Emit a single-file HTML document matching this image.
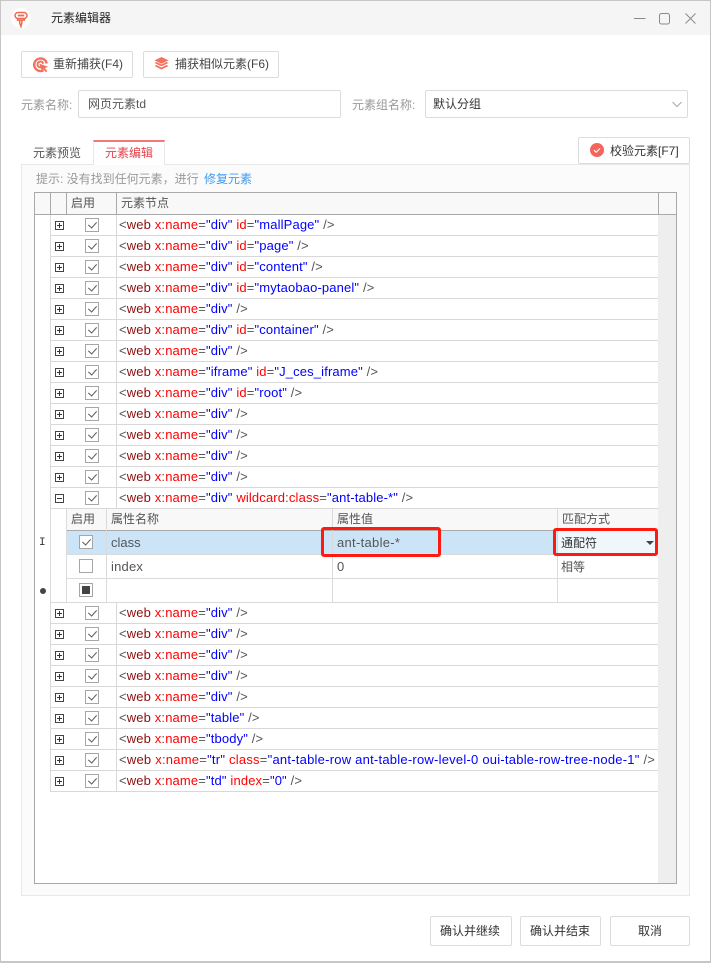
<!DOCTYPE html>
<html lang="zh"><head><meta charset="utf-8"><title>元素编辑器</title>
<style>
*{box-sizing:border-box}
html,body{margin:0;padding:0;width:711px;height:963px;overflow:hidden;background:#fff}
body{position:relative;font:12px "Liberation Sans","Noto Sans CJK SC",sans-serif;color:#333}
.a,.a *{position:absolute}
.a{position:absolute}
div{white-space:nowrap}
.t{line-height:18px;height:18px}
.btn{border:1px solid #dcdcdc;border-radius:2px;background:#fff}
.line{background:#dadada}
.ln2{background:#a9a9a9}
.row{position:absolute;left:51px;width:607px;height:21px;border-bottom:1px solid #d8d8d8}
.row:before{content:"";position:absolute;left:65px;top:0;width:1px;height:21px;background:#d8d8d8}
.pm{position:absolute;left:4px;top:6px;width:9px;height:9px;border:1px solid #444;background:#fff}
.pm:before{content:"";position:absolute;left:1px;top:3px;width:5px;height:1px;background:#333}
.pm.p:after{content:"";position:absolute;left:3px;top:1px;width:1px;height:5px;background:#333}
.cb{position:absolute;width:14px;height:14px;border:1px solid #a6a6a6;background:#fff}
.row .cb{left:34px;top:3px}
.cb.c:after{content:"";position:absolute;left:4px;top:1px;width:4px;height:7px;border-right:1.3px solid #5a5a5a;border-bottom:1.3px solid #5a5a5a;transform:rotate(42deg)}
.x{position:absolute;left:68px;top:1px;line-height:18px;font-size:13px;letter-spacing:.14px;color:#555}
.x b{font-weight:400;color:#8b0f0f}.x u{text-decoration:none;color:#f00}.x em{font-style:normal;color:#00f}
.sh{position:absolute;line-height:18px;color:#555;font-size:12px}
.sv{position:absolute;line-height:18px;color:#555;font-size:13px;letter-spacing:.2px}
</style></head><body>
<!-- window -->
<div class="a" style="left:0;top:0;width:711px;height:963px;border:1px solid #c6c6c6;border-width:1px 1px 2px 1px"></div>
<div class="a" style="left:1px;top:1px;width:709px;height:34px;background:#f5f5f5"></div>
<div class="a" style="left:11px;top:8px;width:20px;height:20px;border-radius:50%;background:#fff"></div>
<svg class="a" style="left:14px;top:11px" width="14" height="17" viewBox="0 0 14 17" fill="none" stroke="#ee6a52" stroke-width="1.5"><rect x="1" y="1.5" width="12" height="6" rx="3"/><rect x="3.8" y="3.6" width="6.4" height="1.8" fill="#ee6a52" stroke="none"/><path d="M3.600 7.500v1.600h6.800V7.500M5.700 9.100v3l1.300 3.400.8-3.400v-3"/></svg>
<div class="a t" style="left:51px;top:9px;font-size:12px;color:#222">元素编辑器</div>
<svg class="a" style="left:632px;top:10px" width="72" height="18" viewBox="0 0 72 18" fill="none" stroke="#8a8a8a" stroke-width="1"><path d="M2 8.500h11.500"/><rect x="27.500" y="3.500" width="10" height="10.500" rx="2"/><path d="M53.500 3.500l10 10M63.500 3.500l-10 10"/></svg>

<!-- top buttons -->
<div class="a btn" style="left:21px;top:51px;width:112px;height:27px"></div>
<svg class="a" style="left:33px;top:57px" width="17" height="17" viewBox="0 0 17 17" fill="none"><path d="M10.500 13.300A6.300 6.300 0 1 1 13.700 6.500" stroke="#f4715f" stroke-width="2.400"/><path d="M7.800 10.300A2.900 2.900 0 1 1 10.200 6.800" stroke="#f4715f" stroke-width="2"/><path d="M6.200 6.600l9 3.100-3.300 1.300 2.400 3-1.500 1.200-2.400-3-1.300 2.600z" fill="#f4715f"/></svg>
<div class="a t" style="left:53px;top:55px;color:#444;font-size:12px">重新捕获(F4)</div>
<div class="a btn" style="left:143px;top:51px;width:136px;height:27px"></div>
<svg class="a" style="left:153px;top:55px" width="17" height="17" viewBox="0 0 17 17" fill="#f4715f"><path d="M8.500 2l7 3.400-7 3.400-7-3.400z"/><path d="M1.500 8l2-1 5 2.500 5-2.500 2 1-7 3.400z"/><path d="M1.500 11l2-1 5 2.500 5-2.500 2 1-7 3.500z"/></svg>
<div class="a t" style="left:175px;top:55px;color:#444;font-size:12px">捕获相似元素(F6)</div>

<!-- form -->
<div class="a t" style="left:21px;top:96px;color:#999">元素名称:</div>
<div class="a btn" style="left:78px;top:90px;width:263px;height:28px"></div>
<div class="a t" style="left:88px;top:95px;color:#555;font-size:12px">网页元素td</div>
<div class="a t" style="left:352px;top:96px;color:#999">元素组名称:</div>
<div class="a btn" style="left:425px;top:90px;width:263px;height:28px"></div>
<div class="a t" style="left:433px;top:95px;color:#333">默认分组</div>
<svg class="a" style="left:671px;top:100px" width="12" height="9" viewBox="0 0 12 9" fill="none" stroke="#b0b0b0" stroke-width="1.2"><path d="M1.500 2l4.500 4.500L10.500 2"/></svg>

<!-- panel -->
<div class="a" style="left:21px;top:164px;width:669px;height:732px;background:#fbfbfb;border:1px solid #e8e8e8"></div>
<div class="a t" style="left:33px;top:144px;color:#555">元素预览</div>
<div class="a" style="left:93px;top:140px;width:72px;height:25px;background:#fff;border:1px solid #e8e8e8;border-top:2px solid #f47a7a;border-bottom:0"></div>
<div class="a t" style="left:105px;top:144px;color:#e8404a">元素编辑</div>
<div class="a btn" style="left:578px;top:137px;width:112px;height:27px"></div>
<div class="a" style="left:590px;top:143px;width:14px;height:14px;border-radius:50%;background:#f4655c"></div>
<svg class="a" style="left:590px;top:143px" width="14" height="14" viewBox="0 0 14 14" fill="none" stroke="#fff" stroke-width="1.100"><path d="M4 7.200l2.200 2L10 5.500"/></svg>
<div class="a t" style="left:610px;top:142px;color:#333;font-size:12px">校验元素[F7]</div>
<div class="a t" style="left:36px;top:170px;color:#999">提示: 没有找到任何元素，进行</div>
<div class="a t" style="left:204px;top:170px;color:#3f9cf5">修复元素</div>

<!-- grid -->
<div class="a" style="left:34px;top:192px;width:643px;height:692px;background:#fff;border:1px solid #a9a9a9"></div>
<div class="a" style="left:35px;top:193px;width:641px;height:21px;background:#f8f8f8"></div>
<div class="a ln2" style="left:35px;top:214px;width:641px;height:1px"></div>
<div class="a ln2" style="left:50px;top:193px;width:1px;height:21px"></div>
<div class="a ln2" style="left:66px;top:193px;width:1px;height:21px"></div>
<div class="a ln2" style="left:116px;top:193px;width:1px;height:21px"></div>
<div class="a ln2" style="left:658px;top:193px;width:1px;height:21px"></div>
<div class="a" style="left:658px;top:215px;width:18px;height:668px;background:#eee"></div>
<div class="a line" style="left:50px;top:215px;width:1px;height:577px"></div>
<div class="a sh" style="left:71px;top:194px">启用</div>
<div class="a sh" style="left:121px;top:194px">元素节点</div>

<div class="row" style="top:215px"><i class="pm p"></i><i class="cb c"></i><span class="x">&lt;<b>web</b> <u>x</u>:<u>name</u>=<em>"div"</em> <u>id</u>=<em>"mallPage"</em> /&gt;</span></div>
<div class="row" style="top:236px"><i class="pm p"></i><i class="cb c"></i><span class="x">&lt;<b>web</b> <u>x</u>:<u>name</u>=<em>"div"</em> <u>id</u>=<em>"page"</em> /&gt;</span></div>
<div class="row" style="top:257px"><i class="pm p"></i><i class="cb c"></i><span class="x">&lt;<b>web</b> <u>x</u>:<u>name</u>=<em>"div"</em> <u>id</u>=<em>"content"</em> /&gt;</span></div>
<div class="row" style="top:278px"><i class="pm p"></i><i class="cb c"></i><span class="x">&lt;<b>web</b> <u>x</u>:<u>name</u>=<em>"div"</em> <u>id</u>=<em>"mytaobao-panel"</em> /&gt;</span></div>
<div class="row" style="top:299px"><i class="pm p"></i><i class="cb c"></i><span class="x">&lt;<b>web</b> <u>x</u>:<u>name</u>=<em>"div"</em> /&gt;</span></div>
<div class="row" style="top:320px"><i class="pm p"></i><i class="cb c"></i><span class="x">&lt;<b>web</b> <u>x</u>:<u>name</u>=<em>"div"</em> <u>id</u>=<em>"container"</em> /&gt;</span></div>
<div class="row" style="top:341px"><i class="pm p"></i><i class="cb c"></i><span class="x">&lt;<b>web</b> <u>x</u>:<u>name</u>=<em>"div"</em> /&gt;</span></div>
<div class="row" style="top:362px"><i class="pm p"></i><i class="cb c"></i><span class="x">&lt;<b>web</b> <u>x</u>:<u>name</u>=<em>"iframe"</em> <u>id</u>=<em>"J_ces_iframe"</em> /&gt;</span></div>
<div class="row" style="top:383px"><i class="pm p"></i><i class="cb c"></i><span class="x">&lt;<b>web</b> <u>x</u>:<u>name</u>=<em>"div"</em> <u>id</u>=<em>"root"</em> /&gt;</span></div>
<div class="row" style="top:404px"><i class="pm p"></i><i class="cb c"></i><span class="x">&lt;<b>web</b> <u>x</u>:<u>name</u>=<em>"div"</em> /&gt;</span></div>
<div class="row" style="top:425px"><i class="pm p"></i><i class="cb c"></i><span class="x">&lt;<b>web</b> <u>x</u>:<u>name</u>=<em>"div"</em> /&gt;</span></div>
<div class="row" style="top:446px"><i class="pm p"></i><i class="cb c"></i><span class="x">&lt;<b>web</b> <u>x</u>:<u>name</u>=<em>"div"</em> /&gt;</span></div>
<div class="row" style="top:467px"><i class="pm p"></i><i class="cb c"></i><span class="x">&lt;<b>web</b> <u>x</u>:<u>name</u>=<em>"div"</em> /&gt;</span></div>
<div class="row" style="top:488px"><i class="pm"></i><i class="cb c"></i><span class="x">&lt;<b>web</b> <u>x</u>:<u>name</u>=<em>"div"</em> <u>wildcard</u>:<u>class</u>=<em>"ant-table-*"</em> /&gt;</span></div>

<!-- sub grid -->
<div class="a" style="left:67px;top:509px;width:591px;height:21px;background:#f8f8f8"></div>
<div class="a" style="left:51px;top:509px;width:16px;height:94px;background:#fff"></div>
<div class="a" style="left:67px;top:531px;width:591px;height:23px;background:#cce4f7"></div>
<div class="a" style="left:558px;top:531px;width:100px;height:23px;background:#f0f7fb"></div>
<div class="a ln2" style="left:67px;top:530px;width:591px;height:1px"></div>
<div class="a line" style="left:67px;top:554px;width:591px;height:1px"></div>
<div class="a line" style="left:67px;top:578px;width:591px;height:1px"></div>
<div class="a line" style="left:51px;top:602px;width:607px;height:1px"></div>
<div class="a line" style="left:66px;top:509px;width:1px;height:94px"></div>
<div class="a line" style="left:106px;top:509px;width:1px;height:94px"></div>
<div class="a line" style="left:332px;top:509px;width:1px;height:94px"></div>
<div class="a line" style="left:557px;top:509px;width:1px;height:94px"></div>
<div class="sh" style="left:71px;top:510px">启用</div>
<div class="sh" style="left:111px;top:510px">属性名称</div>
<div class="sh" style="left:337px;top:510px">属性值</div>
<div class="sh" style="left:562px;top:510px">匹配方式</div>
<i class="cb c" style="left:79px;top:535px"></i>
<i class="cb" style="left:79px;top:559px"></i>
<i class="cb" style="left:79px;top:583px"></i>
<div class="a" style="left:82px;top:586px;width:8px;height:8px;background:#444"></div>
<div class="sv" style="left:111px;top:534px;letter-spacing:0">class</div>
<div class="sv" style="left:337px;top:534px;letter-spacing:.3px">ant-table-*</div>
<div class="sh" style="left:561px;top:534px;color:#333">通配符</div>
<div class="a" style="left:646px;top:541px;width:0;height:0;border:4px solid transparent;border-top:4px solid #444;border-bottom:0"></div>
<div class="sv" style="left:111px;top:558px">index</div>
<div class="sv" style="left:337px;top:558px">0</div>
<div class="sh" style="left:561px;top:558px">相等</div>
<div class="a" style="left:39px;top:537px;font:11px/12px 'Liberation Mono',monospace;color:#333">I</div>
<div class="a" style="left:40px;top:588px;width:6px;height:6px;border-radius:50%;background:#444"></div>

<div class="row" style="top:603px"><i class="pm p"></i><i class="cb c"></i><span class="x">&lt;<b>web</b> <u>x</u>:<u>name</u>=<em>"div"</em> /&gt;</span></div>
<div class="row" style="top:624px"><i class="pm p"></i><i class="cb c"></i><span class="x">&lt;<b>web</b> <u>x</u>:<u>name</u>=<em>"div"</em> /&gt;</span></div>
<div class="row" style="top:645px"><i class="pm p"></i><i class="cb c"></i><span class="x">&lt;<b>web</b> <u>x</u>:<u>name</u>=<em>"div"</em> /&gt;</span></div>
<div class="row" style="top:666px"><i class="pm p"></i><i class="cb c"></i><span class="x">&lt;<b>web</b> <u>x</u>:<u>name</u>=<em>"div"</em> /&gt;</span></div>
<div class="row" style="top:687px"><i class="pm p"></i><i class="cb c"></i><span class="x">&lt;<b>web</b> <u>x</u>:<u>name</u>=<em>"div"</em> /&gt;</span></div>
<div class="row" style="top:708px"><i class="pm p"></i><i class="cb c"></i><span class="x">&lt;<b>web</b> <u>x</u>:<u>name</u>=<em>"table"</em> /&gt;</span></div>
<div class="row" style="top:729px"><i class="pm p"></i><i class="cb c"></i><span class="x">&lt;<b>web</b> <u>x</u>:<u>name</u>=<em>"tbody"</em> /&gt;</span></div>
<div class="row" style="top:750px"><i class="pm p"></i><i class="cb c"></i><span class="x" style="letter-spacing:.23px">&lt;<b>web</b> <u>x</u>:<u>name</u>=<em>"tr"</em> <u>class</u>=<em>"ant-table-row ant-table-row-level-0 oui-table-row-tree-node-1"</em> /&gt;</span></div>
<div class="row" style="top:771px"><i class="pm p"></i><i class="cb c"></i><span class="x">&lt;<b>web</b> <u>x</u>:<u>name</u>=<em>"td"</em> <u>index</u>=<em>"0"</em> /&gt;</span></div>

<!-- red highlights -->
<div class="a" style="left:321px;top:527px;width:120px;height:30px;border:3px solid #ff1a10;border-radius:3px"></div>
<div class="a" style="left:553px;top:528px;width:105px;height:28px;border:3px solid #ff1a10;border-radius:3px"></div>

<!-- bottom buttons -->
<div class="a btn" style="left:430px;top:916px;width:82px;height:30px"></div>
<div class="a t" style="left:440px;top:922px;color:#333">确认并继续</div>
<div class="a btn" style="left:520px;top:916px;width:81px;height:30px"></div>
<div class="a t" style="left:530px;top:922px;color:#333">确认并结束</div>
<div class="a btn" style="left:610px;top:916px;width:80px;height:30px"></div>
<div class="a t" style="left:638px;top:922px;color:#333">取消</div>
</body></html>
